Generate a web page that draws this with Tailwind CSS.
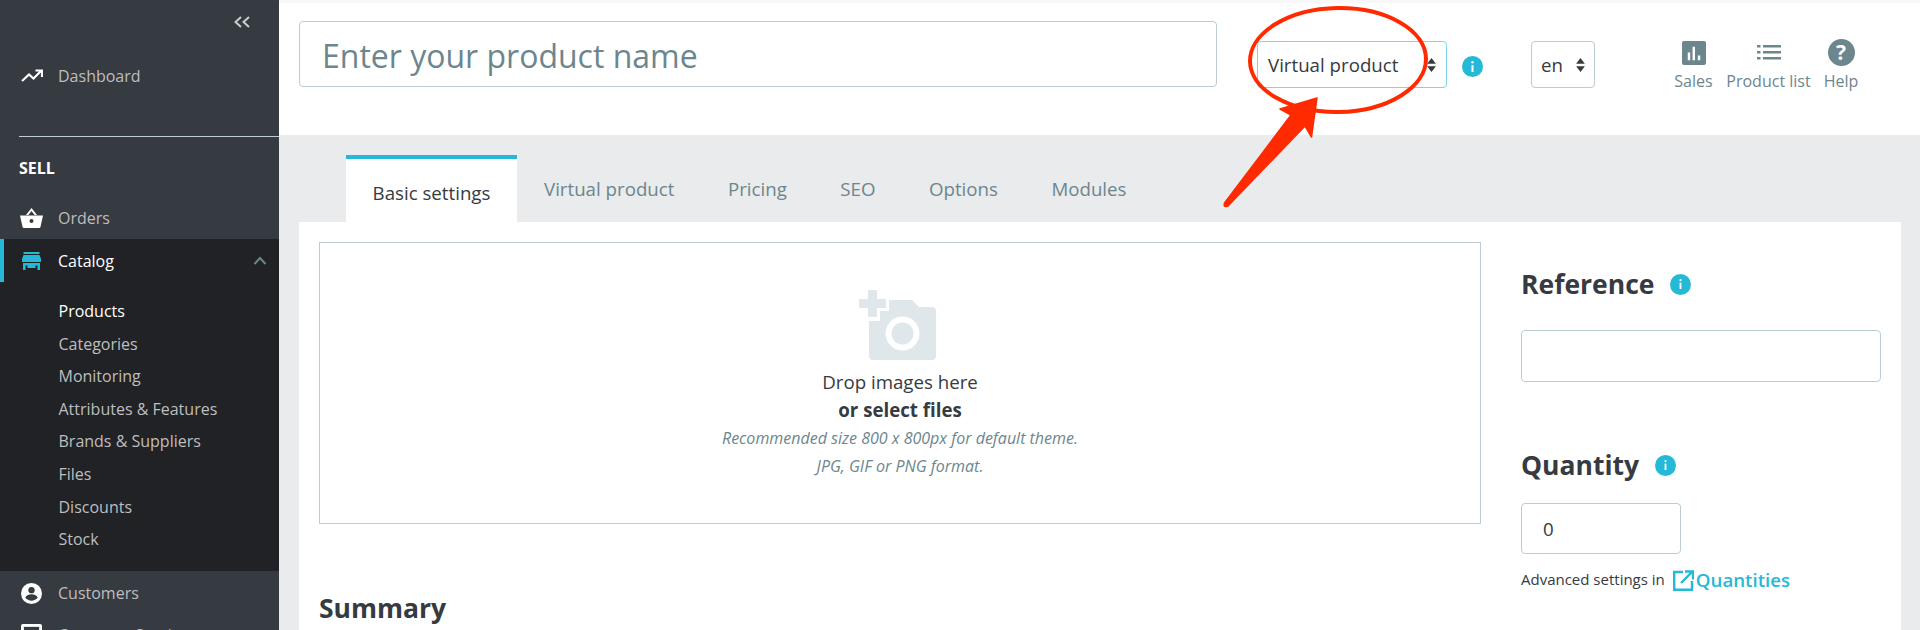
<!DOCTYPE html>
<html><head><meta charset="utf-8"><script src="https://cdn.jsdelivr.net/npm/@tailwindcss/browser@4"></script></head>
<body class="m-0 overflow-hidden bg-[#eaebec]">
<div class="relative w-[1920px] h-[630px] overflow-hidden flex font-['Open_Sans',sans-serif] text-[#363a41]">
  <aside class="w-[279px] h-[630px] shrink-0 bg-[#363a41] flex flex-col overflow-hidden">
    <div class="h-[47px] shrink-0 flex items-start justify-end pr-[28px] pt-[15px]">
      <svg class="w-[18px] h-[14px]" viewBox="0 0 18 14" fill="none" stroke="#c8ced1" stroke-width="2"><path d="M8 2 2.500 7 8 12M16 2 10.500 7 16 12"/></svg>
    </div>
    <div class="h-[58px] shrink-0 flex items-center pl-[21px] gap-[15px] text-[#bebebe] text-[16px]">
      <svg class="w-[22px] h-[14px]" viewBox="0 0 22 14" fill="none" stroke="#fff" stroke-width="2.200"><path d="M1 12 8 5.500l4.500 4L20 2M14.500 1.500H21V8"/></svg>
      <span>Dashboard</span>
    </div>
    <div class="mt-[31px] ml-[19px] h-px shrink-0 bg-[#bbcdd2]"></div>
    <div class="pl-[19px] pt-[19px] h-[60px] shrink-0 text-[16px] leading-[24px] font-bold text-white">SELL</div>
    <div class="h-[42px] shrink-0 flex items-center pl-[20px] gap-[15px] text-[#bebebe] text-[16px]">
      <svg class="w-[23px] h-[20px]" viewBox="0 0 23 20" fill="#fff"><path d="M0 7.500h23L20.500 18.800a1.500 1.500 0 0 1-1.500 1.200H4a1.500 1.500 0 0 1-1.500-1.200ZM11.500 0 17 7h-2.400l-3.100-4-3.100 4H6Z"/><circle cx="11.500" cy="13" r="2" fill="#363a41"/></svg>
      <span>Orders</span>
    </div>
    <div class="bg-[#202226] h-[332px] shrink-0 flex flex-col">
      <div class="relative h-[43px] shrink-0 flex items-center pl-[22px] gap-[17px] text-white text-[16px]">
        <div class="absolute left-0 top-0 w-[4px] h-[43px] bg-[#25b9d7]"></div>
        <svg class="w-[19px] h-[18px]" viewBox="0 0 19 18" fill="#25b9d7"><path d="M1.500 0h16v2h-16ZM1.500 3h16L19 7v3H0V7ZM1 11h17v7h-2.500v-4.500h-12V18H1ZM5.500 13.500h8V16h-8Z"/></svg>
        <span>Catalog</span>
        <svg class="absolute right-[12px] top-[17px] w-[14px] h-[9px]" viewBox="0 0 14 9" fill="none" stroke="#6c868e" stroke-width="2"><path d="M1.500 8 7 2 12.500 8"/></svg>
      </div>
      <div class="pl-[58.500px] pt-[13px] flex flex-col text-[16px] leading-[32.600px] text-[#bebebe]">
        <span class="text-white">Products</span><span>Categories</span><span>Monitoring</span><span>Attributes &amp; Features</span><span>Brands &amp; Suppliers</span><span>Files</span><span>Discounts</span><span>Stock</span>
      </div>
    </div>
    <div class="h-[44px] shrink-0 flex items-center pl-[21px] gap-[16px] text-[#bebebe] text-[16px]">
      <svg class="w-[21px] h-[21px]" viewBox="0 0 22 22"><circle cx="11" cy="11" r="11" fill="#fff"/><circle cx="11" cy="7.500" r="3.300" fill="#363a41"/><path d="M4.500 15.500c1-3 4-3.800 6.500-3.800s5.500.8 6.500 3.800c-1.500 1.800-4 3-6.500 3s-5-1.200-6.500-3Z" fill="#363a41"/></svg>
      <span>Customers</span>
    </div>
    <div class="h-[30px] shrink-0 flex items-start pt-[9px] pl-[21px] gap-[16px] text-[#bebebe] text-[16px] leading-[22px]">
      <svg class="w-[21px] h-[21px] shrink-0" viewBox="0 0 22 22"><rect width="22" height="22" rx="2" fill="#fff"/><rect x="3" y="3" width="16" height="10" fill="#363a41"/></svg>
      <span>Customer Service</span>
    </div>
  </aside>
  <main class="flex-1 flex flex-col min-w-0">
    <header class="h-[135px] shrink-0 bg-white flex items-start border-t-[3px] border-[#f8f8f8]">
      <div class="ml-[20px] mt-[18px] w-[918px] h-[66px] rounded-[4px] border border-[#bbcdd2] flex items-center pl-[22px] pt-[3px] text-[32px] text-[#6c868e]">Enter your product name</div>
      <div class="ml-[40px] mt-[38px] w-[190px] h-[47px] rounded-[4px] border border-[#7cd5e7] flex items-center justify-between pl-[10px] pr-[10px] pt-[1px] text-[18.700px]">
        <span>Virtual product</span>
        <svg class="w-[9px] h-[14px]" viewBox="0 0 10 16" fill="#363a41"><path d="M5 0 10 6.500H0ZM5 16 0 9.500H10Z"/></svg>
      </div>
      <div class="ml-[15px] mt-[53px] w-[21px] h-[21px] rounded-full bg-[#25b9d7] flex items-center justify-center">
        <svg class="w-[3px] h-[11px]" viewBox="0 0 3 11" fill="#fff"><circle cx="1.500" cy="1.300" r="1.200"/><rect x=".5" y="4" width="2" height="7"/></svg>
      </div>
      <div class="ml-[48px] mt-[38px] w-[64px] h-[47px] rounded-[4px] border border-[#bbcdd2] flex items-center justify-between pl-[9px] pr-[9px] pt-[1px] text-[18.700px]">
        <span>en</span>
        <svg class="w-[9px] h-[14px]" viewBox="0 0 10 16" fill="#363a41"><path d="M5 0 10 6.500H0ZM5 16 0 9.500H10Z"/></svg>
      </div>
      <div class="ml-[78px] mt-[38px] flex text-[16px] leading-[20px] text-[#6c868e]">
        <div class="flex flex-col items-center w-[41px]">
          <svg class="w-[24px] h-[24px]" viewBox="0 0 25 25"><rect width="25" height="25" rx="2" fill="#6c868e"/><path d="M6 12h2.500v8H6ZM11 6h2.500v14H11ZM16.500 15H19v5h-2.500Z" fill="#fff"/></svg>
          <span class="mt-[6px]">Sales</span>
        </div>
        <div class="flex flex-col items-center ml-[12px] w-[85px]">
          <svg class="w-[24px] h-[15px] mt-[4px]" viewBox="0 0 24 15" fill="#6c868e"><path d="M0 0h3.500v2.500H0ZM6 0h18v2.500H6ZM0 6h3.500v2.500H0ZM6 6h18v2.500H6ZM0 12h3.500v2.500H0ZM6 12h18v2.500H6Z"/></svg>
          <span class="mt-[11px] whitespace-nowrap">Product list</span>
        </div>
        <div class="flex flex-col items-center ml-[13px] w-[34px]">
          <div class="w-[27px] h-[27px] -mt-[2px] rounded-full bg-[#6c868e] flex items-center justify-center text-white text-[21px] leading-[27px] font-bold">?</div>
          <span class="mt-[5px]">Help</span>
        </div>
      </div>
    </header>
    <div class="flex-1 flex flex-col min-h-0 pl-[20px] pr-[19px]">
      <nav class="h-[87px] shrink-0 flex items-end pl-[47px] text-[18.700px] text-[#6c868e]">
        <div class="w-[171px] h-[67px] border-t-[4px] border-[#25b9d7] bg-white flex items-center justify-center text-[#363a41] pt-[5px]">Basic settings</div>
        <div class="flex items-center h-[67px] pt-[2px] pl-[27px] gap-[53.500px]"><span>Virtual product</span><span>Pricing</span><span>SEO</span><span>Options</span><span>Modules</span></div>
      </nav>
      <section class="flex-1 bg-white flex min-h-0 pl-[20px] pt-[20px] pr-[20px]">
        <div class="w-[1162px] shrink-0">
          <div class="h-[282px] border border-[#bbcdd2] flex flex-col items-center pt-[47px]">
            <svg class="w-[77px] h-[70px] shrink-0 mr-[5px]" viewBox="0 0 77 70" fill="#dfe7ea"><path d="M9 0H18V9H27V18H18V27H9V18H0V9H9Z"/><path d="M30 10H53L60 17H73a4 4 0 0 1 4 4V66a4 4 0 0 1-4 4H14a4 4 0 0 1-4-4V31H21V21H30Z"/><circle cx="43.500" cy="43.500" r="17" fill="#fff"/><circle cx="43.500" cy="43.500" r="11" fill="#dfe7ea"/></svg>
            <div class="text-[18.700px] leading-[28px] mt-[8px]">Drop images here</div>
            <div class="text-[18.700px] leading-[28px] font-bold">or select files</div>
            <div class="text-[16px] leading-[28px] italic text-[#6c868e]">Recommended size 800 x 800px for default theme.</div>
            <div class="text-[16px] leading-[28px] italic text-[#6c868e]">JPG, GIF or PNG format.</div>
          </div>
          <h2 class="text-[26.500px] font-bold mt-[67px] leading-[35px]">Summary</h2>
        </div>
        <div class="ml-[40px] flex-1 flex flex-col">
          <div class="flex items-center gap-[16px] h-[36px] mt-[24px]">
            <span class="text-[26.500px] font-bold leading-[36px]">Reference</span>
            <span class="w-[21px] h-[21px] rounded-full bg-[#25b9d7] flex items-center justify-center"><svg class="w-[3px] h-[10px]" viewBox="0 0 3 11" fill="#fff"><circle cx="1.500" cy="1.300" r="1.200"/><rect x=".5" y="4" width="2" height="7"/></svg></span>
          </div>
          <div class="mt-[28px] w-[360px] h-[52px] rounded-[4px] border border-[#bbcdd2]"></div>
          <div class="flex items-center gap-[16px] h-[36px] mt-[65px]">
            <span class="text-[26.500px] font-bold leading-[36px]">Quantity</span>
            <span class="w-[21px] h-[21px] rounded-full bg-[#25b9d7] flex items-center justify-center"><svg class="w-[3px] h-[10px]" viewBox="0 0 3 11" fill="#fff"><circle cx="1.500" cy="1.300" r="1.200"/><rect x=".5" y="4" width="2" height="7"/></svg></span>
          </div>
          <div class="mt-[20px] w-[160px] h-[51px] rounded-[4px] border border-[#bbcdd2] flex items-center pl-[21px] pt-[1px] text-[18.700px]">0</div>
          <div class="mt-[10px] flex items-center text-[15px] h-[30px]">
            <span>Advanced settings in</span>
            <svg class="ml-[8px] mt-[3px] w-[21px] h-[21px]" viewBox="0 0 21 21" fill="none" stroke="#25b9d7" stroke-width="2.400"><path d="M10 2H1.200v17.800H19V11M8 13 19 2M12 1.500h8v8"/></svg>
            <span class="ml-[2px] mt-[3px] text-[18.700px] font-semibold text-[#25b9d7]">Quantities</span>
          </div>
        </div>
      </section>
    </div>
  </main>
  <svg class="absolute left-0 top-0 pointer-events-none" width="1920" height="630" viewBox="0 0 1920 630" fill="none">
    <ellipse cx="1338" cy="60" rx="88" ry="52" stroke="#ff2a00" stroke-width="4" transform="rotate(-1 1338 60)"/>
    <path d="M1224.500 203 1291 115 1280 109 1317 98 1311.500 137 1305 126 1228 206Q1223 208 1224.500 203Z" fill="#ff2a00" stroke="#ff2a00" stroke-width="1.500" stroke-linejoin="round"/>
  </svg>
</div>
</body></html>
